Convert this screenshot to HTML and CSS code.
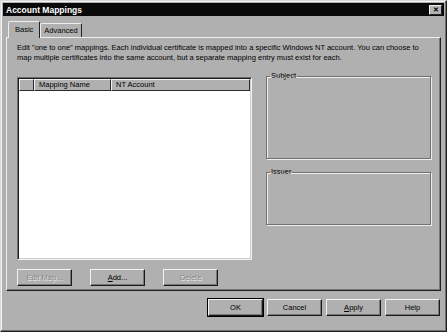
FILE: index.html
```html
<!DOCTYPE html>
<html lang="en">
<head>
  <meta charset="UTF-8">
  <title>Account Mappings</title>
  <link rel="stylesheet" href="styles.css">
</head>
<body>
  <div class="window">
    <div class="titlebar">
      <span class="title">Account Mappings</span>
      <span class="close">&#x2715;</span>
    </div>

    <div class="content">
      <!-- Tabs -->
      <div class="tabs">
        <div class="tab active">Basic</div>
        <div class="tab">Advanced</div>
      </div>

      <div class="panel">
        <p class="intro">Edit "one to one" mappings. Each individual certificate is mapped into a specific Windows NT account. You can choose to map multiple certificates into the same account, but a separate mapping entry must exist for each.</p>

        <div class="main">
          <div class="left">
            <div class="listview">
              <div class="list-header">
                <div class="col col-icon"></div>
                <div class="col col-name">Mapping Name</div>
                <div class="col col-account">NT Account</div>
              </div>
              <div class="list-body"></div>
            </div>
            <div class="list-buttons">
              <button class="btn" disabled>Edit Map...</button>
              <button class="btn"><u>A</u>dd...</button>
              <button class="btn" disabled>Delete</button>
            </div>
          </div>

          <div class="right">
            <fieldset class="group subject">
              <legend>Subject</legend>
            </fieldset>
            <fieldset class="group issuer">
              <legend>Issuer</legend>
            </fieldset>
          </div>
        </div>
      </div>

      <div class="dialog-buttons">
        <button class="btn default">OK</button>
        <button class="btn">Cancel</button>
        <button class="btn"><u>A</u>pply</button>
        <button class="btn">Help</button>
      </div>
    </div>
  </div>
</body>
</html>
```

FILE: styles.css
```css
/* Global */
body {
  margin: 0;
  padding: 0;
  background: #ababab;
  font-family: 'Liberation Sans', Arial, sans-serif;
  font-size: 7.5px;
  color: #000;
}

.window {
  width: 447px;
  height: 332px;
  box-sizing: border-box;
  background: #b0b0b0;
  border: 1px solid #d8d8d8;
  border-right-color: #202020;
  border-bottom-color: #202020;
  box-shadow: inset -1px -1px 0 #6e6e6e, inset 1px 1px 0 #f4f4f4;
  padding: 2px;
  display: flex;
  flex-direction: column;
}

/* Title bar */
.titlebar {
  height: 13px;
  background: #0a0a0a;
  display: flex;
  align-items: center;
  justify-content: space-between;
  padding: 0 2px 0 3px;
}

.title {
  color: #fff;
  font-weight: bold;
  font-size: 8.5px;
}

.close {
  width: 13px;
  height: 10px;
  background: #b4b4b4;
  border: 1px solid #eee;
  border-right-color: #222;
  border-bottom-color: #222;
  box-sizing: border-box;
  font-size: 7px;
  line-height: 8px;
  text-align: center;
  font-weight: bold;
}

.content {
  flex: 1;
  display: flex;
  flex-direction: column;
  padding: 5px 3px 0 3px;
}

/* Tabs */
.tabs {
  display: flex;
  padding-left: 2px;
  height: 16px;
  align-items: flex-end;
  position: relative;
  z-index: 1;
}

.tab {
  height: 14px;
  padding: 0 3px;
  line-height: 13px;
  border: 1px solid #eee;
  border-bottom: none;
  border-right-color: #202020;
  border-radius: 2px 2px 0 0;
  background: #b0b0b0;
  box-sizing: border-box;
}

.tab.active {
  height: 17px;
  padding: 0 6px;
  margin-bottom: -1px;
  line-height: 15px;
}

.panel {
  height: 254px;
  box-sizing: border-box;
  border: 1px solid #eee;
  border-right-color: #202020;
  border-bottom-color: #202020;
  box-shadow: inset -1px -1px 0 #777;
  padding: 5px 9px 0 10px;
  display: flex;
  flex-direction: column;
}

.intro {
  margin: 0;
  line-height: 10px;
  height: 34px;
}

.main {
  display: flex;
  gap: 14px;
}

/* List view */
.left {
  width: 235px;
}

.listview {
  height: 183px;
  box-sizing: border-box;
  border: 1px solid #6e6e6e;
  border-right-color: #f2f2f2;
  border-bottom-color: #f2f2f2;
  box-shadow: inset 1px 1px 0 #1c1c1c, inset -1px -1px 0 #cfcfcf;
  background: #fff;
  display: flex;
  flex-direction: column;
  padding: 1px;
}

.list-header {
  display: flex;
  height: 12px;
}

.col {
  box-sizing: border-box;
  background: #b0b0b0;
  border: 1px solid #f2f2f2;
  border-right-color: #2a2a2a;
  border-bottom-color: #2a2a2a;
  line-height: 10px;
  padding-left: 4px;
}

.col-icon { width: 15px; }
.col-name { width: 77px; }
.col-account { flex: 1; }

.list-body {
  flex: 1;
}

.list-buttons {
  display: flex;
  gap: 18px;
  padding: 9px 0 0 0;
}

/* Buttons */
.btn {
  width: 55px;
  height: 17px;
  box-sizing: border-box;
  margin: 0;
  padding: 0;
  background: #b0b0b0;
  border: 1px solid #f2f2f2;
  border-right-color: #1a1a1a;
  border-bottom-color: #1a1a1a;
  box-shadow: inset -1px -1px 0 #777;
  font-family: inherit;
  font-size: 7.5px;
  color: #000;
}

.btn:disabled {
  color: #888;
  text-shadow: 1px 1px 0 #eee;
}

.btn.default {
  outline: 1px solid #000;
  outline-offset: 0;
}

/* Group boxes */
.right {
  flex: 1;
  display: flex;
  flex-direction: column;
}

.group {
  margin: 0;
  padding: 0;
  border: 1px solid #707070;
  box-shadow: 1px 1px 0 #eee, inset 1px 1px 0 #eee;
}

.group legend {
  padding: 0 1px;
  margin-left: 3px;
  line-height: 8px;
}

.subject {
  height: 85px;
  margin-top: -5px;
}

.issuer {
  height: 55px;
  margin-top: 9px;
}

/* Bottom row */
.dialog-buttons {
  display: flex;
  justify-content: flex-end;
  gap: 4px;
  padding: 8px 1px 0 0;
}
```
